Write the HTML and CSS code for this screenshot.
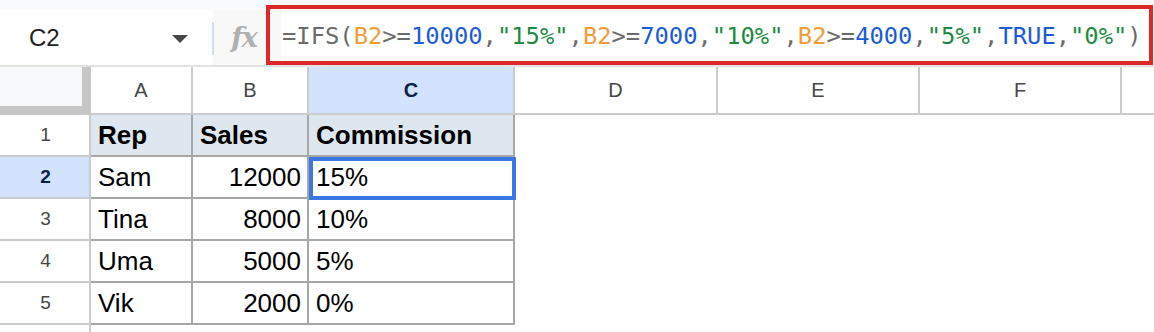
FILE: index.html
```html
<!DOCTYPE html>
<html lang="en">
<head>
    <meta charset="UTF-8">
    <title>Commission - IFS</title>
    <link rel="stylesheet" href="styles.css">
</head>
<body>

<div class="toolbar">
    <div class="name-box">
        <span>C2</span>
        <span class="caret"></span>
    </div>
    <div class="divider"></div>
    <div class="fx">fx</div>
    <div class="formula">
        <span class="op">=IFS(</span><span class="ref">B2</span><span class="op">&gt;=</span><span class="lit">10000</span><span class="op">,</span><span class="str">"15%"</span><span class="op">,</span><span class="ref">B2</span><span class="op">&gt;=</span><span class="lit">7000</span><span class="op">,</span><span class="str">"10%"</span><span class="op">,</span><span class="ref">B2</span><span class="op">&gt;=</span><span class="lit">4000</span><span class="op">,</span><span class="str">"5%"</span><span class="op">,</span><span class="lit">TRUE</span><span class="op">,</span><span class="str">"0%"</span><span class="op">)</span>
    </div>
</div>

<div class="sheet">
    <!-- cabeçalho das colunas -->
    <div class="corner"></div>
    <div class="col-head">A</div>
    <div class="col-head">B</div>
    <div class="col-head active">C</div>
    <div class="col-head">D</div>
    <div class="col-head">E</div>
    <div class="col-head">F</div>
    <div class="col-head last"></div>

    <!-- linha 1 -->
    <div class="row-head">1</div>
    <div class="cell data head">Rep</div>
    <div class="cell data head">Sales</div>
    <div class="cell data head">Commission</div>
    <div class="cell"></div>
    <div class="cell"></div>
    <div class="cell"></div>
    <div class="cell"></div>

    <!-- linha 2 -->
    <div class="row-head active">2</div>
    <div class="cell data">Sam</div>
    <div class="cell data num">12000</div>
    <div class="cell data selected">15%</div>
    <div class="cell"></div>
    <div class="cell"></div>
    <div class="cell"></div>
    <div class="cell"></div>

    <!-- linha 3 -->
    <div class="row-head">3</div>
    <div class="cell data">Tina</div>
    <div class="cell data num">8000</div>
    <div class="cell data">10%</div>
    <div class="cell"></div>
    <div class="cell"></div>
    <div class="cell"></div>
    <div class="cell"></div>

    <!-- linha 4 -->
    <div class="row-head">4</div>
    <div class="cell data">Uma</div>
    <div class="cell data num">5000</div>
    <div class="cell data">5%</div>
    <div class="cell"></div>
    <div class="cell"></div>
    <div class="cell"></div>
    <div class="cell"></div>

    <!-- linha 5 -->
    <div class="row-head">5</div>
    <div class="cell data">Vik</div>
    <div class="cell data num">2000</div>
    <div class="cell data">0%</div>
    <div class="cell"></div>
    <div class="cell"></div>
    <div class="cell"></div>
    <div class="cell"></div>

    <!-- linha 6 (cortada) -->
    <div class="row-head last"></div>
    <div class="cell"></div>
    <div class="cell"></div>
    <div class="cell"></div>
    <div class="cell"></div>
    <div class="cell"></div>
    <div class="cell"></div>
    <div class="cell"></div>
</div>

</body>
</html>
```

FILE: styles.css
```css
/* Base */
body {
    margin: 0;
    padding: 0;
    background-color: #fff;
    font-family: "Liberation Sans", Arial, sans-serif;
    color: #000;
    overflow: hidden;
}

/* Barra de fórmulas */
.toolbar {
    display: flex;
    height: 55px;
    padding-top: 10px;
    background-color: #f9fbfd;
    border-bottom: 2px solid #e1e3e1;
}

.name-box {
    width: 212px;
    box-sizing: border-box;
    padding-left: 29px;
    padding-right: 24px;
    display: flex;
    align-items: center;
    justify-content: space-between;
    background-color: #fff;
    font-size: 24px;
    color: #1f1f1f;
}

.caret {
    width: 0;
    height: 0;
    border-left: 8px solid transparent;
    border-right: 8px solid transparent;
    border-top: 8px solid #444746;
    margin-top: 2px;
}

.divider {
    width: 2px;
    margin: 12px 0 10px;
    background-color: #d3deec;
}

.fx {
    width: 52px;
    display: flex;
    align-items: center;
    justify-content: center;
    padding-left: 8px;
    box-sizing: border-box;
    background-color: #f8f8f8;
    font-family: "DejaVu Serif", serif;
    font-style: italic;
    font-weight: bold;
    font-size: 27px;
    letter-spacing: -1px;
    color: #b0b0b0;
}

.formula {
    flex: 1;
    margin: -5px 1px 0 0;
    height: 60px;
    box-sizing: border-box;
    border: 4px solid #dc2828;
    padding: 2px 0 0 12px;
    display: flex;
    align-items: center;
    white-space: nowrap;
    background: linear-gradient(to right, #f8f8f8 11px, #fff 11px);
    font-family: "DejaVu Sans Mono", monospace;
    font-size: 23.8px;
}

.op { color: #6b6b6b; }
.ref { color: #f29c35; }
.lit { color: #1a5bd6; }
.str { color: #1d8a3f; }

/* Planilha */
.sheet {
    display: grid;
    grid-template-columns: 91px 102px 116px 206px 203px 202px 202px 1fr;
    grid-template-rows: 48px 42px 42px 42px 42px 42px 20px;
}

.sheet > div {
    box-sizing: border-box;
    display: flex;
    align-items: center;
}

.corner {
    background-color: #f8f9fa;
    border-right: 9px solid #c6c6c6;
    border-bottom: 9px solid #c6c6c6;
}

.col-head {
    justify-content: center;
    border-right: 2px solid #cbcbcb;
    border-bottom: 2px solid #cbcbcb;
    font-size: 20px;
    color: #444746;
}

.col-head.last {
    border-right: none;
}

.row-head {
    justify-content: center;
    border-right: 2px solid #cbcbcb;
    border-bottom: 2px solid #cbcbcb;
    font-size: 19px;
    color: #444746;
    padding-left: 2px;
}

.row-head.last {
    border-bottom: none;
}

.col-head.active,
.row-head.active {
    background-color: #d3e3fd;
    color: #0b1f4b;
    font-weight: bold;
}

.cell {
    font-size: 26px;
    padding: 0 6px 0 7px;
    white-space: nowrap;
}

.cell.data {
    border-right: 2px solid #a7a7a7;
    border-bottom: 2px solid #a7a7a7;
}

.cell.head {
    background-color: #dee6ef;
    font-weight: bold;
}

.cell.num {
    justify-content: flex-end;
}

/* Célula selecionada */
.cell.selected {
    position: relative;
}

.cell.selected::after {
    content: "";
    position: absolute;
    top: 0;
    left: 0;
    right: -3px;
    bottom: -3px;
    border: 4px solid #3a77e4;
}
```
